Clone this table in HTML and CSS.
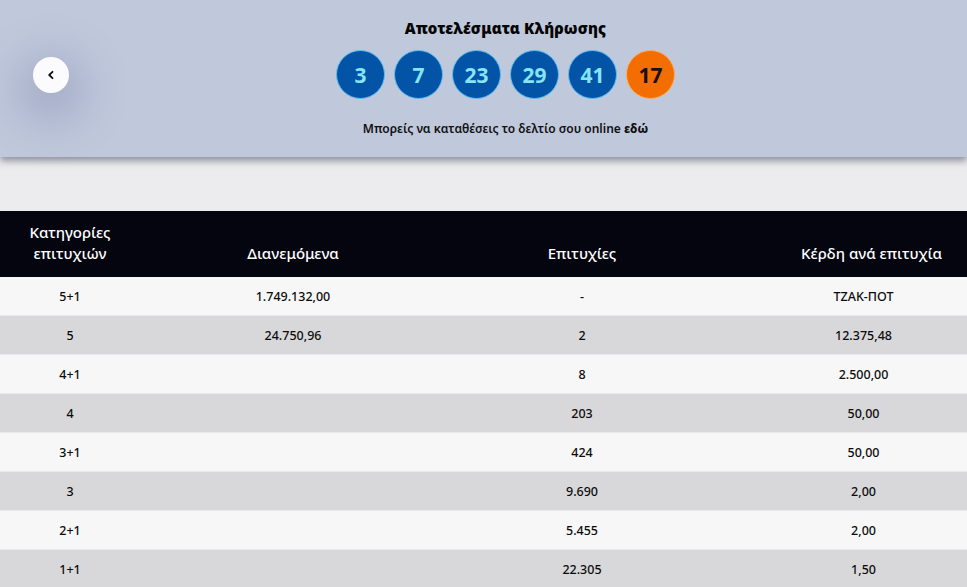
FILE: index.html
```html
<!DOCTYPE html>
<html lang="el">
<head>
<meta charset="utf-8">
<title>Αποτελέσματα Κλήρωσης</title>
<link rel="stylesheet" href="styles.css">
</head>
<body>
<header class="draw">
  <div class="back-col">
    <button class="back" aria-label="Πίσω">
      <svg width="10" height="10" viewBox="0 0 10 10"><path d="M6.5 1.8 L3.2 5 L6.5 8.2" fill="none" stroke="#111" stroke-width="1.8" stroke-linecap="round" stroke-linejoin="round"/></svg>
    </button>
  </div>
  <div class="draw-main">
    <h1 class="title">Αποτελέσματα Κλήρωσης</h1>
    <div class="balls">
      <span class="ball">3</span>
      <span class="ball">7</span>
      <span class="ball">23</span>
      <span class="ball">29</span>
      <span class="ball">41</span>
      <span class="ball joker">17</span>
    </div>
    <p class="note">Μπορείς να καταθέσεις το δελτίο σου online <b>εδώ</b></p>
  </div>
  <div></div>
</header>
<div class="spacer"></div>
<section class="table">
  <div class="row head">
    <div class="c1">Κατηγορίες<br>επιτυχιών</div>
    <div class="c2">Διανεμόμενα</div>
    <div class="c3">Επιτυχίες</div>
    <div class="c4">Κέρδη ανά επιτυχία</div>
  </div>
  <div class="row light"><div class="c1">5+1</div><div class="c2">1.749.132,00</div><div class="c3">-</div><div class="c4">ΤΖΑΚ-ΠΟΤ</div></div>
  <div class="row dark"><div class="c1">5</div><div class="c2">24.750,96</div><div class="c3">2</div><div class="c4">12.375,48</div></div>
  <div class="row light"><div class="c1">4+1</div><div class="c2"></div><div class="c3">8</div><div class="c4">2.500,00</div></div>
  <div class="row dark"><div class="c1">4</div><div class="c2"></div><div class="c3">203</div><div class="c4">50,00</div></div>
  <div class="row light"><div class="c1">3+1</div><div class="c2"></div><div class="c3">424</div><div class="c4">50,00</div></div>
  <div class="row dark"><div class="c1">3</div><div class="c2"></div><div class="c3">9.690</div><div class="c4">2,00</div></div>
  <div class="row light"><div class="c1">2+1</div><div class="c2"></div><div class="c3">5.455</div><div class="c4">2,00</div></div>
  <div class="row dark"><div class="c1">1+1</div><div class="c2"></div><div class="c3">22.305</div><div class="c4">1,50</div></div>
</section>
</body>
</html>
```

FILE: styles.css
```css
* { box-sizing: border-box; }
html, body { margin: 0; padding: 0; }
body {
  background: #ececee;
  font-family: "Noto Sans", "Open Sans", sans-serif;
  color: #111;
  overflow: hidden;
}
.draw {
  position: relative;
  z-index: 2;
  height: 157px;
  background: #c0c8dc;
  display: grid;
  grid-template-columns: 102px 1fr 58px;
  box-shadow: 0 4px 7px rgba(70, 70, 95, 0.55);
}
.back-col {
  display: flex;
  align-items: flex-start;
  justify-content: center;
  padding-top: 57px;
}
.back {
  width: 36px;
  height: 36px;
  border-radius: 50%;
  border: none;
  background: #fbfbfd;
  display: flex;
  align-items: center;
  justify-content: center;
  padding: 0;
  box-shadow: 0 14px 40px 18px rgba(110, 120, 160, 0.3);
}
.draw-main {
  display: flex;
  flex-direction: column;
  align-items: center;
  padding-top: 18px;
}
.title {
  margin: 0;
  font-size: 15px;
  line-height: 20px;
  font-weight: 900;
  color: #050505;
  letter-spacing: 0.1px;
}
.balls {
  display: flex;
  gap: 9px;
  margin-top: 12px;
}
.ball {
  width: 49px;
  height: 49px;
  border-radius: 50%;
  background: #0354a6;
  border: 1px solid #5cc0f0;
  color: #86e4f4;
  font-size: 21px;
  font-weight: 700;
  display: flex;
  align-items: center;
  justify-content: center;
}
.ball.joker {
  background: #f46d00;
  border-color: #f8b060;
  color: #1a1005;
}
.note {
  margin: 22px 0 0;
  font-size: 12px;
  line-height: 16px;
  font-weight: 600;
  color: #111;
}
.note b { font-weight: 800; }
.spacer { height: 54px; }
.table { display: flex; flex-direction: column; }
.row {
  display: grid;
  grid-template-columns: 140px 306px 272px 1fr;
  height: 39px;
  align-items: center;
  font-size: 12.5px;
  font-weight: 500;
  color: #0c0c0c;
  border-bottom: 1px solid #e9e9ec;
}
.row > div { text-align: center; }
.row .c4 { padding-left: 42px; }
.row.head {
  height: 66px;
  background: #04050f;
  color: #fff;
  font-size: 15px;
  font-weight: 500;
  align-items: end;
  padding-bottom: 13px;
  line-height: 21px;
  border-bottom: none;
}
.row.head .c4 { padding-left: 58px; }
.light { background: #f7f7f7; }
.dark { background: #d8d8db; }
```
